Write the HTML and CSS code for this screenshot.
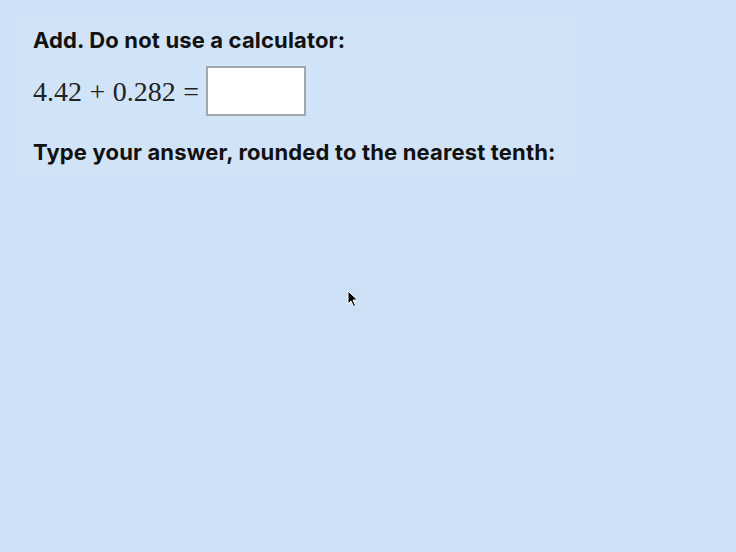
FILE: index.html
```html
<!DOCTYPE html>
<html>
<head>
<meta charset="utf-8">
<link rel="stylesheet" href="styles.css">
</head>
<body>
<div class="panel">
  <p class="prompt">Add. Do not use a calculator:</p>
  <div class="equation">
    <span class="math">4.42 + 0.282 =</span>
    <input class="answer" type="text" aria-label="answer">
  </div>
  <p class="prompt">Type your answer, rounded to the nearest tenth:</p>
</div>
<svg class="cursor" width="12" height="18" viewBox="0 0 12 18"><path d="M1 1 L1 14 L4 11 L6.5 16.5 L8.5 15.5 L6 10 L10.5 10 Z" fill="#000" stroke="#fff" stroke-width="1"/></svg>
</body>
</html>
```
FILE: styles.css
```css
html, body {
  margin: 0;
  height: 100%;
  background: #cde0f5;
}
body {
  position: relative;
  font-family: Inter, "Noto Sans", sans-serif;
  color: #111;
}
.panel {
  margin: 15px 0 0 15px;
  width: 560px;
  padding: 11px 18px 9px;
  box-sizing: border-box;
  background: #d1e3f6;
}
.prompt {
  margin: 0;
  font-size: 22px;
  font-weight: 700;
  line-height: 28px;
  letter-spacing: 0.15px;
}
.equation {
  display: flex;
  align-items: center;
  gap: 7px;
  margin: 12px 0 22px;
}
.math {
  font-family: "Liberation Serif", "DejaVu Serif", serif;
  font-size: 28px;
  color: #222;
  word-spacing: 0.5px;
  position: relative;
  top: 1px;
}
.answer {
  width: 100px;
  height: 50px;
  box-sizing: border-box;
  border: 2px solid #a3a6aa;
  background: #fff;
  margin: 0;
  padding: 0;
}
.cursor {
  position: absolute;
  left: 347px;
  top: 290px;
}
```
